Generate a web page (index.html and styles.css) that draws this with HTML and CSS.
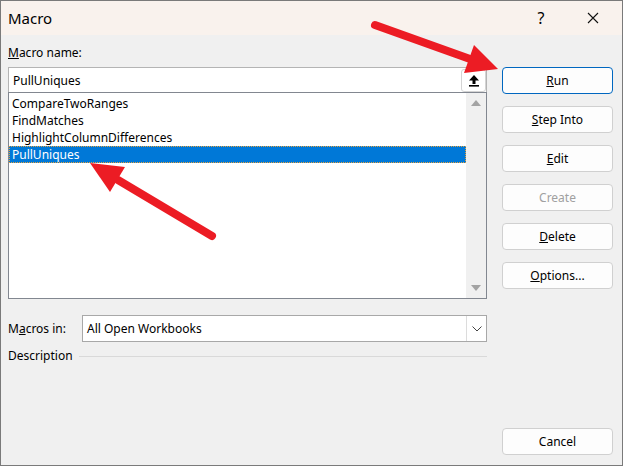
FILE: index.html
```html
<!DOCTYPE html>
<html lang="en">
<head>
    <meta charset="UTF-8">
    <title>Macro</title>
    <link rel="stylesheet" href="styles.css">
</head>
<body>
    <div class="window">
        <div class="titlebar">
            <span class="title">Macro</span>
            <span class="help">?</span>
            <span class="close">
                <svg width="12" height="12" viewBox="0 0 12 12"><path d="M1 1 L11 11 M11 1 L1 11" stroke="#111" stroke-width="1.1" fill="none"/></svg>
            </span>
        </div>

        <div class="dialog">
            <div class="left">
                <div class="label"><u>M</u>acro name:</div>
                <div class="name-box">
                    <span class="name-text">PullUniques</span>
                    <span class="upload-btn">
                        <svg width="12" height="13" viewBox="0 0 12 13">
                            <path d="M6 1 L11 6.5 L7.5 6.5 L7.5 10 L4.5 10 L4.5 6.5 L1 6.5 Z" fill="#000"/>
                            <rect x="1" y="11" width="10" height="1.6" fill="#000"/>
                        </svg>
                    </span>
                </div>
                <div class="list">
                    <div class="items">
                        <div class="item">CompareTwoRanges</div>
                        <div class="item">FindMatches</div>
                        <div class="item">HighlightColumnDifferences</div>
                        <div class="item selected">PullUniques</div>
                    </div>
                    <div class="scrollbar">
                        <span class="arrow-up"></span>
                        <span class="arrow-down"></span>
                    </div>
                </div>

                <div class="macros-in">
                    <span class="label-in">M<u>a</u>cros in:</span>
                    <div class="select">
                        <span class="select-text">All Open Workbooks</span>
                        <span class="select-btn">
                            <svg width="10" height="6" viewBox="0 0 10 6"><path d="M0.5 0.5 L5 5 L9.5 0.5" stroke="#444" stroke-width="1" fill="none"/></svg>
                        </span>
                    </div>
                </div>

                <div class="description">
                    <span>Description</span>
                    <span class="rule"></span>
                </div>
            </div>

            <div class="right">
                <div class="btn default"><u>R</u>un</div>
                <div class="btn"><u>S</u>tep Into</div>
                <div class="btn"><u>E</u>dit</div>
                <div class="btn disabled">Create</div>
                <div class="btn"><u>D</u>elete</div>
                <div class="btn"><u>O</u>ptions...</div>
                <div class="btn cancel">Cancel</div>
            </div>
        </div>

        <!-- red annotation arrows -->
        <svg class="annotations" width="623" height="466" viewBox="0 0 623 466">
            <line x1="375" y1="25" x2="470" y2="59" stroke="#ec1c24" stroke-width="8" stroke-linecap="round"/>
            <polygon points="498,69 464,73 474,45" fill="#ec1c24"/>
            <line x1="212" y1="236" x2="118" y2="180" stroke="#ec1c24" stroke-width="8" stroke-linecap="round"/>
            <polygon points="90,163 125,167 110,192" fill="#ec1c24"/>
        </svg>
    </div>
</body>
</html>
```

FILE: styles.css
```css
/* Dialog frame */
body {
    margin: 0;
    font-family: 'Noto Sans', 'Open Sans', sans-serif;
    font-size: 12px;
    color: #000;
    background: #f0f0f0;
}

.window {
    position: relative;
    width: 623px;
    height: 466px;
    box-sizing: border-box;
    border: 1px solid #7a7a7a;
    background-color: #f0f0f0;
    overflow: hidden;
}

.titlebar {
    height: 34px;
    display: flex;
    align-items: center;
    background-color: #f9f2ed;
}

.title {
    font-size: 15px;
    padding-left: 7px;
    flex: 1;
}

.help {
    font-size: 16px;
    width: 20px;
    text-align: center;
    margin-right: 36px;
}

.close {
    width: 12px;
    height: 12px;
    margin-right: 23px;
    display: flex;
}

/* Main area */
.dialog {
    display: flex;
    height: 430px;
}

.left {
    width: 479px;
    padding: 10px 0 0 7px;
    display: flex;
    flex-direction: column;
}

.label {
    line-height: 16px;
    margin-bottom: 6px;
}

.name-box {
    height: 25px;
    box-sizing: border-box;
    border: 1px solid #b4b4b4;
    border-bottom: none;
    background: #fff;
    display: flex;
    align-items: center;
    justify-content: space-between;
}

.name-text {
    padding-left: 4px;
}

.upload-btn {
    width: 25px;
    height: 23px;
    box-sizing: border-box;
    border: 1px solid #d4d4d4;
    border-radius: 3px;
    margin-right: 0;
    display: flex;
    align-items: center;
    justify-content: center;
    background: #fff;
}

.list {
    height: 207px;
    box-sizing: border-box;
    border: 1px solid #828790;
    background: #fff;
    display: flex;
}

.items {
    flex: 1;
    padding-top: 2px;
}

.item {
    height: 17px;
    line-height: 17px;
    padding-left: 3px;
}

.item.selected {
    background-color: #0078d7;
    color: #fff;
    outline: 1px dotted #e8a23c;
    outline-offset: -1px;
}

.scrollbar {
    width: 20px;
    background: #f0f0f0;
    display: flex;
    flex-direction: column;
    justify-content: space-between;
    align-items: center;
    padding: 7px 0;
}

.arrow-up, .arrow-down {
    width: 0;
    height: 0;
    border-left: 5px solid transparent;
    border-right: 5px solid transparent;
}

.arrow-up {
    border-bottom: 6px solid #a3a3a3;
}

.arrow-down {
    border-top: 6px solid #a3a3a3;
}

.macros-in {
    display: flex;
    align-items: center;
    margin-top: 16px;
}

.label-in {
    width: 74px;
}

.select {
    flex: 1;
    height: 27px;
    box-sizing: border-box;
    border: 1px solid #a8a8a8;
    background: #fff;
    display: flex;
    align-items: center;
    justify-content: space-between;
}

.select-text {
    padding-left: 4px;
}

.select-btn {
    width: 20px;
    height: 25px;
    box-sizing: border-box;
    border-left: 1px solid #dcdcdc;
    display: flex;
    align-items: center;
    justify-content: center;
}

.description {
    display: flex;
    align-items: center;
    margin-top: 6px;
    line-height: 16px;
}

.rule {
    flex: 1;
    height: 1px;
    margin-left: 6px;
    background-color: #d9d9d9;
}

/* Buttons column */
.right {
    width: 111px;
    margin-left: 15px;
    padding: 32px 0 10px;
    display: flex;
    flex-direction: column;
    gap: 12px;
}

.btn {
    height: 27px;
    box-sizing: border-box;
    border: 1px solid #d0d0d0;
    border-radius: 4px;
    background-color: #fdfdfd;
    display: flex;
    align-items: center;
    justify-content: center;
}

.btn.default {
    border-color: #0067c0;
}

.btn.disabled {
    color: #a0a0a0;
}

.btn.cancel {
    margin-top: auto;
}

.annotations {
    position: absolute;
    top: -1px;
    left: -1px;
    pointer-events: none;
}
```
